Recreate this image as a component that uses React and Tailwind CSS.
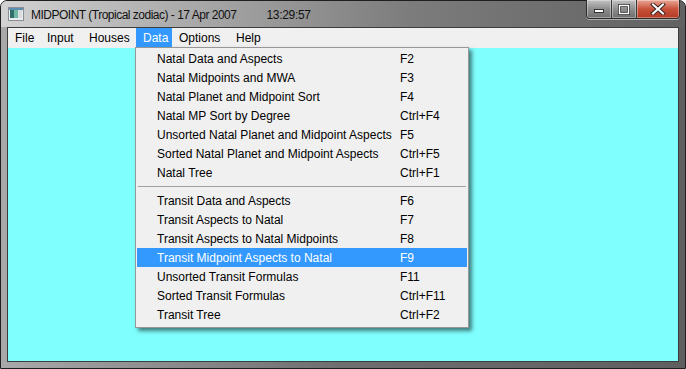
import React from 'react';

const menus = [
  { label: 'File', w: 'w-[32px]' },
  { label: 'Input', w: 'w-[42px]' },
  { label: 'Houses', w: 'w-[54px]' },
  { label: 'Data', w: 'w-[36px]', active: true },
  { label: 'Options', w: 'w-[57px]' },
  { label: 'Help', w: 'w-[40px]' },
];

const natal = [
  ['Natal Data and Aspects', 'F2'],
  ['Natal Midpoints and MWA', 'F3'],
  ['Natal Planet and Midpoint Sort', 'F4'],
  ['Natal MP Sort by Degree', 'Ctrl+F4'],
  ['Unsorted Natal Planet and Midpoint Aspects', 'F5'],
  ['Sorted Natal Planet and Midpoint Aspects', 'Ctrl+F5'],
  ['Natal Tree', 'Ctrl+F1'],
];

const transit = [
  ['Transit Data and Aspects', 'F6'],
  ['Transit Aspects to Natal', 'F7'],
  ['Transit Aspects to Natal Midpoints', 'F8'],
  ['Transit Midpoint Aspects to Natal', 'F9', true],
  ['Unsorted Transit Formulas', 'F11'],
  ['Sorted Transit Formulas', 'Ctrl+F11'],
  ['Transit Tree', 'Ctrl+F2'],
];

function Item({ label, keys, hot }) {
  return (
    <div className={`flex h-[19px] items-center pl-[20px] ${hot ? 'bg-[#3399ff] text-white' : 'text-[#000]'}`}>
      <span className="w-[243px] whitespace-nowrap">{label}</span>
      <span className="whitespace-nowrap">{keys}</span>
    </div>
  );
}

function AppIcon() {
  return (
    <svg width="16" height="14" viewBox="0 0 16 14" className="ml-[7px] mr-[7px]">
      <rect x="0.5" y="0.5" width="15" height="13" fill="#e8ecef" stroke="#8a9096" />
      <rect x="2" y="3" width="4" height="8" fill="#2f6f6a" />
      <rect x="6" y="3" width="4" height="8" fill="#6fb7a4" />
      <rect x="10" y="3" width="4" height="8" fill="#d9dde0" />
      <rect x="1" y="1" width="14" height="2" fill="#5b8fb0" />
    </svg>
  );
}

function CaptionButtons() {
  return (
    <div className="ml-auto mr-[5px] -mt-[1px] flex self-start h-[19px] rounded-b-[4px] border border-t-0 border-[#2c2c2c] overflow-hidden shadow-[0_1px_0_rgba(255,255,255,0.45)]">
      <div className="w-[25px] flex items-center justify-center bg-gradient-to-b from-[#c4c4c4] via-[#8e8e8e] to-[#6f6f6f] border-r border-[#3a3a3a] shadow-[inset_0_0_0_1px_rgba(255,255,255,0.35)]">
        <svg width="12" height="10" viewBox="0 0 12 10">
          <rect x="1.5" y="5.5" width="9" height="3" fill="#fff" stroke="#333" />
        </svg>
      </div>
      <div className="w-[25px] flex items-center justify-center bg-gradient-to-b from-[#c4c4c4] via-[#8e8e8e] to-[#6f6f6f] border-r border-[#3a3a3a] shadow-[inset_0_0_0_1px_rgba(255,255,255,0.35)]">
        <svg width="12" height="11" viewBox="0 0 12 11">
          <rect x="1.5" y="1.5" width="9" height="8" fill="none" stroke="#333" strokeWidth="3" />
          <rect x="1.5" y="1.5" width="9" height="8" fill="none" stroke="#fff" strokeWidth="1.4" />
        </svg>
      </div>
      <div className="w-[42px] flex items-center justify-center bg-gradient-to-b from-[#e8a596] via-[#c8513b] to-[#b33a22] shadow-[inset_0_0_0_1px_rgba(255,255,255,0.35)]">
        <svg width="16" height="12" viewBox="0 0 16 12">
          <path d="M3 1.5 L13 10.5 M13 1.5 L3 10.5" stroke="#3b2a28" strokeWidth="4" strokeLinecap="square" />
          <path d="M3 1.5 L13 10.5 M13 1.5 L3 10.5" stroke="#fff" strokeWidth="2" strokeLinecap="square" />
        </svg>
      </div>
    </div>
  );
}

export default function App() {
  return (
    <div className="w-[686px] h-[369px] bg-white font-['Liberation_Sans',Arial,sans-serif] text-[12px]">
      <div className="relative w-[686px] h-[369px] flex flex-col rounded-t-[7px] border border-[#1f1f1f] bg-gradient-to-r from-[#a9a9a9] via-[#6e6e6e] to-[#5f5f5f]">
        <div className="h-[26px] flex items-center rounded-t-[6px] bg-gradient-to-r from-[#d2d2d2] via-[#7c7c7c] via-60% to-[#626262]">
          <AppIcon />
          <span className="whitespace-nowrap text-[#111] text-[12px] tracking-[-0.5px] mt-[1px]">MIDPOINT (Tropical zodiac) - 17 Apr 2007</span>
          <span className="whitespace-nowrap text-[#111] text-[12px] tracking-[-0.3px] mt-[1px] ml-[30px]">13:29:57</span>
          <CaptionButtons />
        </div>
        <div className="mx-[6px] mb-[6px] flex-1 flex flex-col border border-[#3c3c3c]">
          <div className="h-[20px] flex bg-[#f0f0f0] text-[#000]">
            {menus.map((m) => (
              <div key={m.label} className={`${m.w} pl-[7px] flex items-center ${m.active ? 'bg-[#3399ff] text-white' : ''}`}>
                {m.label}
              </div>
            ))}
          </div>
          <div className="flex-1 bg-[#80ffff]" />
        </div>

        <div className="absolute left-[134px] top-[46px] w-[334px] h-[281px] border border-[#979797] bg-[#f0f0f0] px-[1px] pt-[1px] shadow-[3px_3px_4px_rgba(0,0,0,0.5)]">
          {natal.map(([l, k]) => (
            <Item key={l} label={l} keys={k} />
          ))}
          <div className="h-[9px] flex items-center px-[1px]">
            <div className="w-full h-[1px] bg-[#a0a0a0]" />
          </div>
          {transit.map(([l, k, hot]) => (
            <Item key={l} label={l} keys={k} hot={hot} />
          ))}
        </div>
      </div>
    </div>
  );
}
